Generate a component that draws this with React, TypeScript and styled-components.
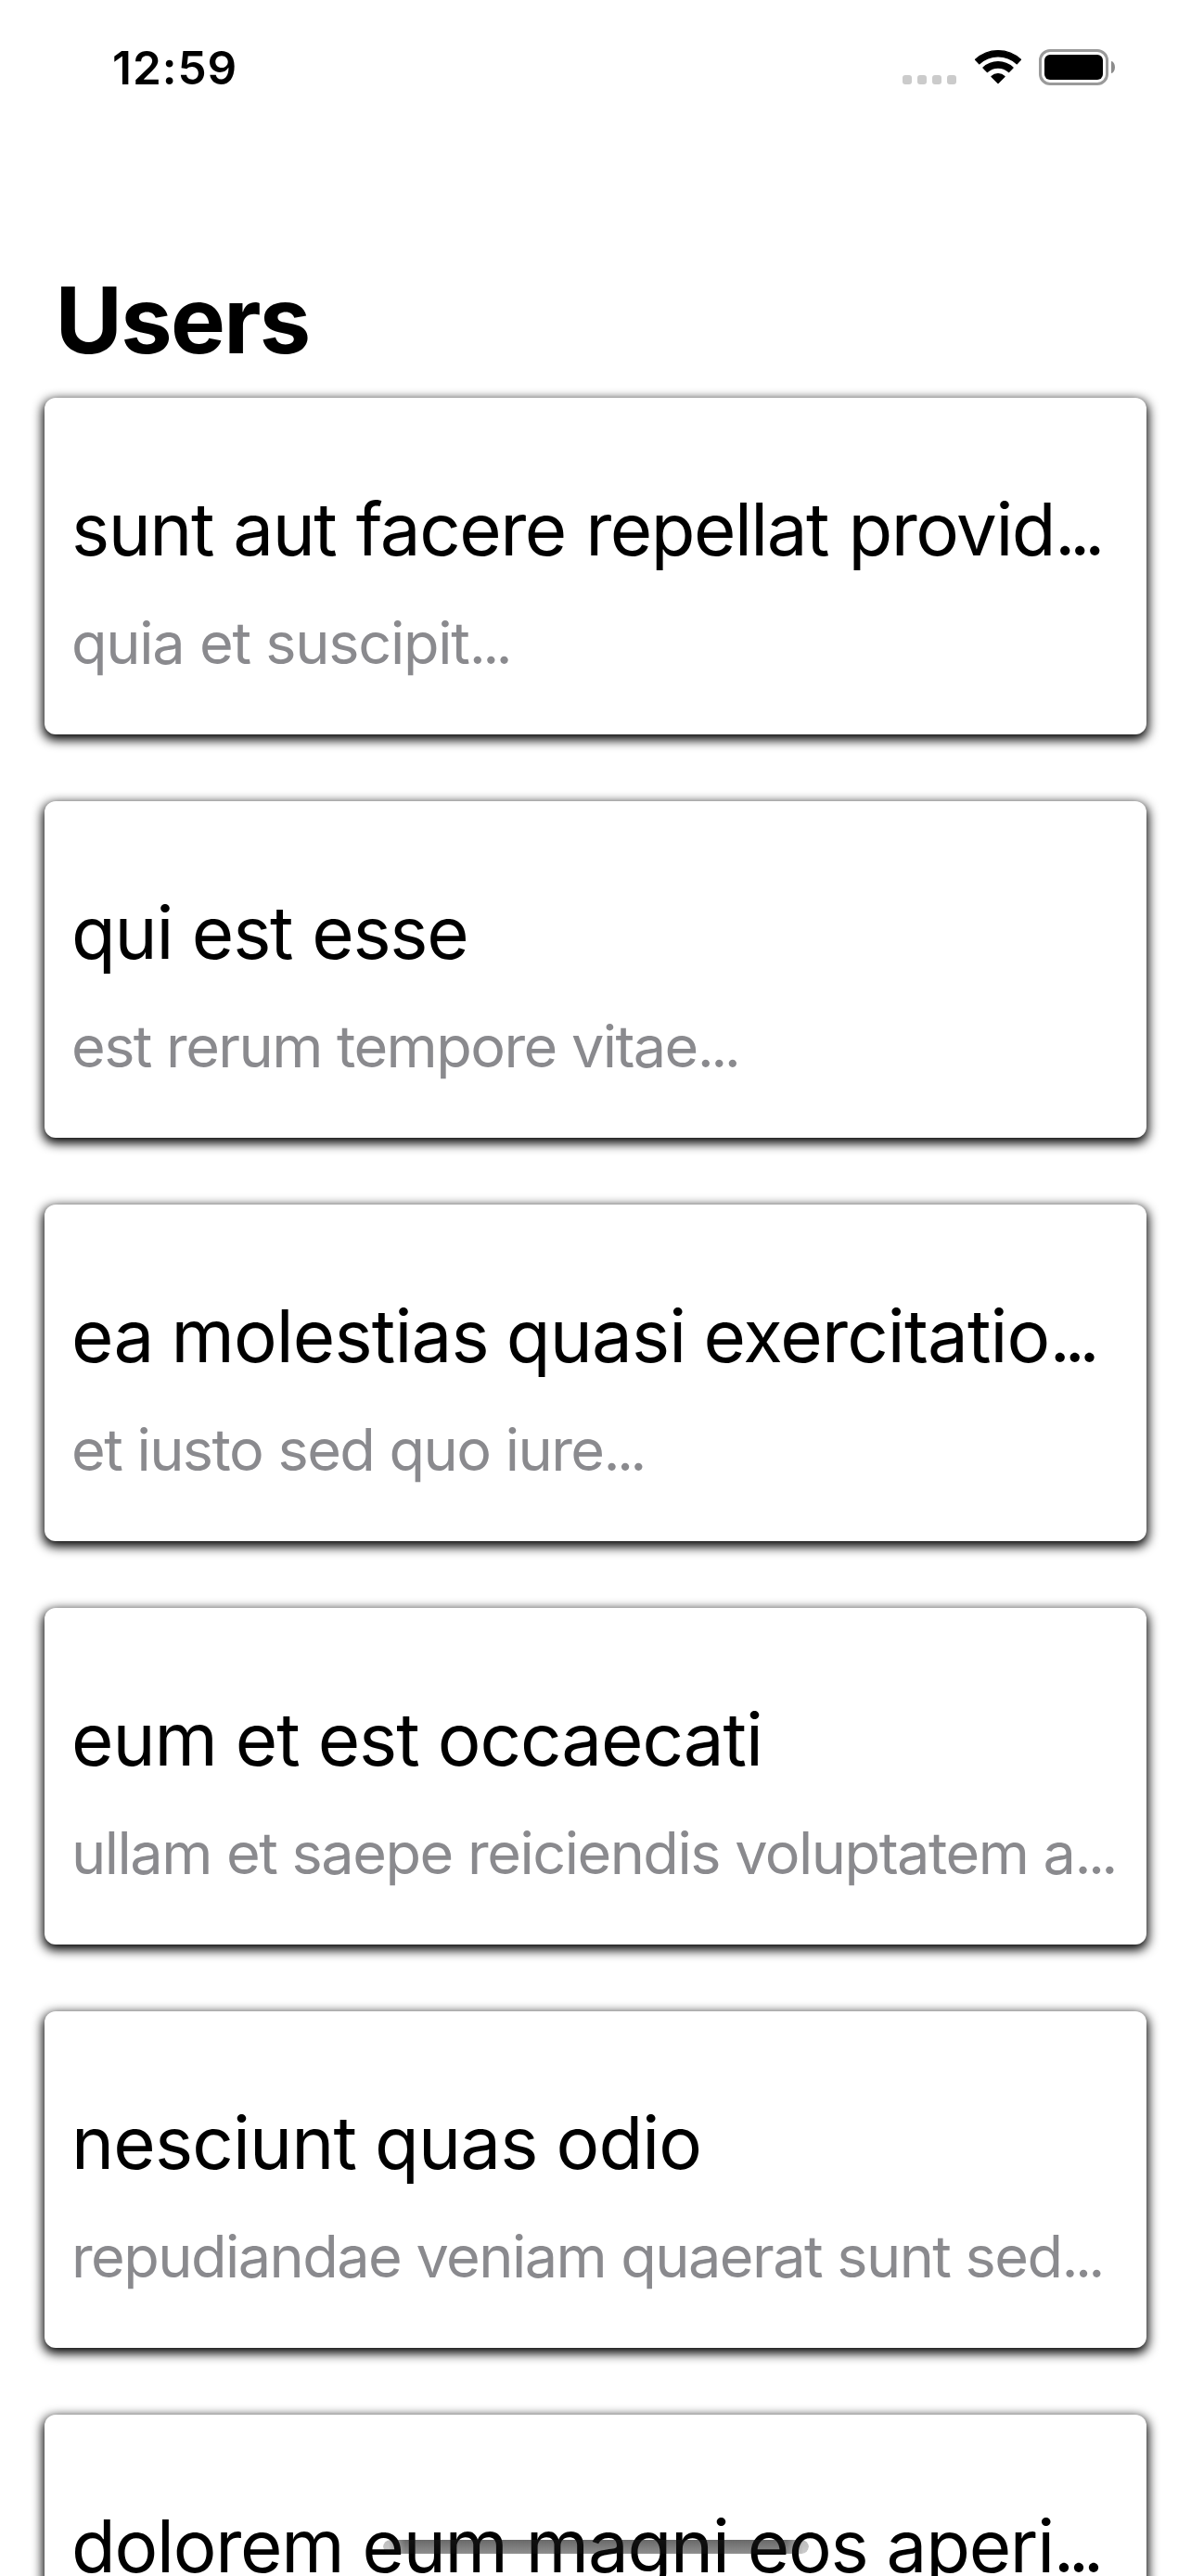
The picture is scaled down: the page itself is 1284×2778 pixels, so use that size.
import React from "react";
import styled, { createGlobalStyle } from "styled-components";

const GlobalStyle = createGlobalStyle`
  *, *::before, *::after { box-sizing: border-box; }
  html, body { margin: 0; padding: 0; background: #fff; }
  body { overflow: hidden; }
`;

const Screen = styled.div`
  position: relative;
  display: flex;
  flex-direction: column;
  width: 1284px;
  height: 2778px;
  overflow: hidden;
  background: #fff;
  color: #000;
  font-family: Inter, "Liberation Sans", sans-serif;
`;

const StatusBar = styled.header`
  display: flex;
  flex: none;
  align-items: flex-start;
  justify-content: space-between;
  height: 132px;
  padding: 0 82px 0 121px;
`;

const Clock = styled.time`
  margin-top: 43px;
  font-size: 49.5px;
  font-weight: 600;
  line-height: 60px;
  letter-spacing: 0.95px;
`;

const StatusIcons = styled.div`
  display: flex;
  align-items: flex-end;
  height: 39px;
  margin-top: 53px;
`;

const Signal = styled.div`
  display: flex;
  gap: 6px;
  margin: 0 18.5px 1px 0;
`;

const SignalDot = styled.span`
  width: 10px;
  height: 10px;
  border-radius: 3px;
  background: #cbcbcb;
`;

const WifiIcon = styled.svg`
  display: block;
  width: 52px;
  height: 38px;
  margin: 0 18.5px 1px 0;
`;

const Battery = styled.div`
  display: flex;
  align-items: center;
  gap: 3px;
`;

const BatteryCase = styled.div`
  width: 75px;
  height: 39px;
  padding: 3px;
  border: 3px solid #9a9a9a;
  border-radius: 12px;
`;

const BatteryLevel = styled.div`
  width: 63px;
  height: 27px;
  border-radius: 6px;
  background: #000;
`;

const BatteryTip = styled.div`
  width: 4px;
  height: 13px;
  border-radius: 0 4px 4px 0 / 0 6.5px 6.5px 0;
  background: #8c8c8c;
`;

const Heading = styled.h1`
  flex: none;
  margin: 153px 0 24px 59.5px;
  font-size: 99px;
  font-weight: 700;
  line-height: 120px;
  letter-spacing: -1.75px;
`;

const CardList = styled.main`
  display: flex;
  flex: none;
  flex-direction: column;
  gap: 72px;
  padding: 0 48px;
`;

const Card = styled.article`
  display: flex;
  flex-direction: column;
  gap: 37px;
  height: 363px;
  padding: 95px 0 0 29px;
  border-radius: 12px;
  background: #fff;
  box-shadow: 0 4px 12px 1.5px #000;
  white-space: nowrap;
`;

const Title = styled.h2<{ $tracking: number; $wordGap: number }>`
  margin: 0;
  font-size: 78px;
  font-weight: 400;
  line-height: 94px;
  letter-spacing: ${(p) => p.$tracking}px;
  word-spacing: ${(p) => p.$wordGap}px;
`;

const Body = styled.p<{ $tracking: number }>`
  margin: 0;
  color: #8a8a8e;
  font-size: 63px;
  line-height: 76px;
  letter-spacing: ${(p) => p.$tracking}px;
`;

const Ellipsis = styled.span`
  letter-spacing: -0.084em;

  ${Body} & {
    letter-spacing: -0.059em;
  }
`;

const HomeIndicator = styled.div`
  position: absolute;
  top: 2739px;
  left: 413px;
  width: 459px;
  height: 15px;
  border-radius: 7.5px;
  background: linear-gradient(rgba(26, 26, 26, 0.655), rgba(20, 20, 20, 0.48));
  mask-image: linear-gradient(
    90deg,
    rgba(0, 0, 0, 0.45) 6px,
    #000 24px,
    #000 calc(100% - 24px),
    rgba(0, 0, 0, 0.45) calc(100% - 6px)
  );
`;

interface Post {
  title: string;
  body: string;
  titleTracking: number;
  titleWordGap: number;
  bodyTracking: number;
}

const posts: Post[] = [
  { title: "sunt aut facere repellat provid...", body: "quia et suscipit...", titleTracking: -1.5, titleWordGap: 1, bodyTracking: -1.25 },
  { title: "qui est esse", body: "est rerum tempore vitae...", titleTracking: -1.21, titleWordGap: 0, bodyTracking: -1.56 },
  { title: "ea molestias quasi exercitatio...", body: "et iusto sed quo iure...", titleTracking: -0.85, titleWordGap: -2, bodyTracking: -1.54 },
  { title: "eum et est occaecati", body: "ullam et saepe reiciendis voluptatem a...", titleTracking: -1.02, titleWordGap: -1, bodyTracking: -1.5 },
  { title: "nesciunt quas odio", body: "repudiandae veniam quaerat sunt sed...", titleTracking: -0.84, titleWordGap: -1.2, bodyTracking: -1.55 },
  { title: "dolorem eum magni eos aperi...", body: "dignissimos aperiam dolorem qui...", titleTracking: -1.25, titleWordGap: -0.5, bodyTracking: -1.5 },
];

function Truncated({ text }: { text: string }) {
  if (!text.endsWith("...")) return <>{text}</>;
  return (
    <>
      {text.slice(0, -3)}
      <Ellipsis>...</Ellipsis>
    </>
  );
}

function Wifi() {
  return (
    <WifiIcon viewBox="0 0 52 38" fill="#000" stroke="#000" strokeWidth="1.4" strokeLinejoin="round">
      <path d="M1.6 11.3A35.6 35.6 0 0 1 50.4 11.3L46.2 15.7A29.6 29.6 0 0 0 5.8 15.7Z" />
      <path d="M10 20.1A23.3 23.3 0 0 1 42 20.1L37.6 24.6A17 17 0 0 0 14.4 24.6Z" />
      <path d="M19 29.4A10.2 10.2 0 0 1 33 29.4L26 36.4Z" />
    </WifiIcon>
  );
}

export default function App() {
  return (
    <Screen>
      <GlobalStyle />
      <StatusBar>
        <Clock>12:59</Clock>
        <StatusIcons>
          <Signal>
            <SignalDot />
            <SignalDot />
            <SignalDot />
            <SignalDot />
          </Signal>
          <Wifi />
          <Battery>
            <BatteryCase>
              <BatteryLevel />
            </BatteryCase>
            <BatteryTip />
          </Battery>
        </StatusIcons>
      </StatusBar>
      <Heading>Users</Heading>
      <CardList>
        {posts.map((post) => (
          <Card key={post.title}>
            <Title $tracking={post.titleTracking} $wordGap={post.titleWordGap}>
              <Truncated text={post.title} />
            </Title>
            <Body $tracking={post.bodyTracking}>
              <Truncated text={post.body} />
            </Body>
          </Card>
        ))}
      </CardList>
      <HomeIndicator />
    </Screen>
  );
}
